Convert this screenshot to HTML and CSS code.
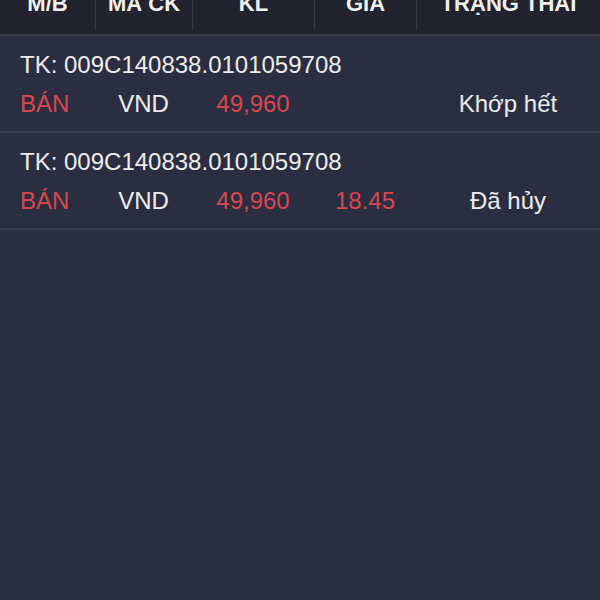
FILE: index.html
```html
<html lang="vi">
<head>
    <meta charset="UTF-8">
    <meta name="viewport" content="width=device-width, initial-scale=1.0">
    <title>Sổ lệnh</title>
    <link rel="stylesheet" href="styles.css">
</head>
<body>
    <div class="order-head">
        <div class="head-cell"><span>M/B</span></div>
        <div class="head-cell"><span>MÃ CK</span></div>
        <div class="head-cell"><span>KL</span></div>
        <div class="head-cell"><span>GIÁ</span></div>
        <div class="head-cell"><span>TRẠNG THÁI</span></div>
    </div>

    <div class="order">
        <div class="account">TK: 009C140838.0101059708</div>
        <div class="order-line">
            <div class="cell side red">BÁN</div>
            <div class="cell">VND</div>
            <div class="cell red">49,960</div>
            <div class="cell red"></div>
            <div class="cell">Khớp hết</div>
        </div>
    </div>

    <div class="order">
        <div class="account">TK: 009C140838.0101059708</div>
        <div class="order-line">
            <div class="cell side red">BÁN</div>
            <div class="cell">VND</div>
            <div class="cell red">49,960</div>
            <div class="cell red">18.45</div>
            <div class="cell">Đã hủy</div>
        </div>
    </div>
</body>
</html>
```

FILE: styles.css
```css
body {
    margin: 0;
    background-color: #2b2e41;
    font-family: "Liberation Sans", Arial, sans-serif;
    color: #ededed;
    overflow: hidden;
}
.order-head,
.order-line {
    display: grid;
    grid-template-columns: 95px 97px 122px 102px 1fr;
}
.order-head {
    height: 34px;
    background-color: #22232e;
    border-bottom: 2px solid #3c3e50;
    overflow: hidden;
}
.head-cell {
    height: 30px;
    text-align: center;
    font-size: 22px;
    font-weight: bold;
    color: #f2f2f2;
    line-height: 22px;
}
.head-cell + .head-cell {
    border-left: 1px solid #393a47;
}
.head-cell span {
    display: block;
    margin-top: -7px;
}
.order {
    padding: 9px 0 8px 0;
    border-bottom: 2px solid #3c3f52;
    font-size: 24px;
    line-height: 39px;
}
.account {
    padding-left: 20px;
}
.cell {
    text-align: center;
}
.cell.side {
    text-align: left;
    padding-left: 20px;
}
.cell.price {
    padding-right: 4px;
}
.red {
    color: #d8474f;
}
```
